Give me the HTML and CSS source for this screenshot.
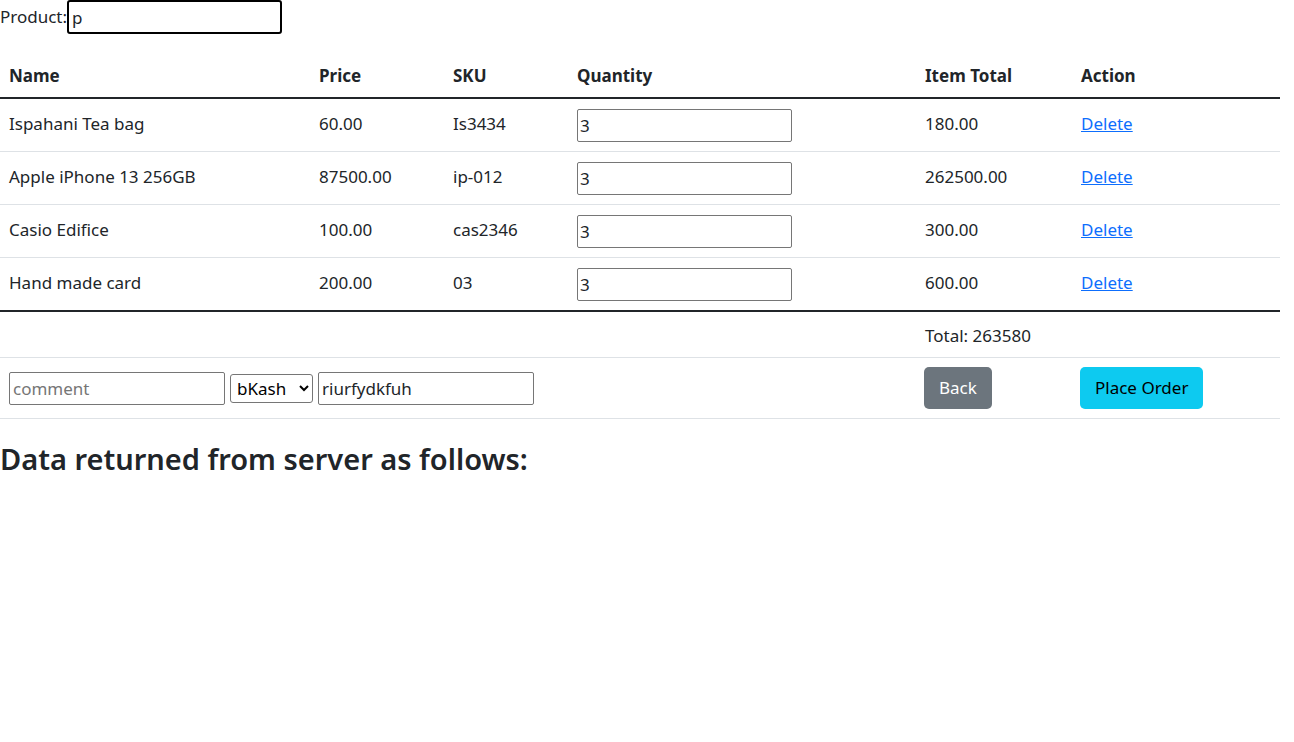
FILE: index.html
```html
<!DOCTYPE html>
<html lang="en">
<head>
<meta charset="utf-8">
<title>Order</title>
<link rel="stylesheet" href="styles.css">
</head>
<body>
<div class="product-row">
  <label class="product-label" for="product">Product:</label>
  <input id="product" class="product-input" type="text" value="p">
</div>

<table class="cart">
  <colgroup>
    <col class="c-name"><col class="c-price"><col class="c-sku"><col class="c-qty"><col class="c-total"><col class="c-action">
  </colgroup>
  <thead>
    <tr><th>Name</th><th>Price</th><th>SKU</th><th>Quantity</th><th>Item Total</th><th>Action</th></tr>
  </thead>
  <tbody>
    <tr><td>Ispahani Tea bag</td><td>60.00</td><td>Is3434</td><td class="qty"><input class="qty-input" type="text" value="3"></td><td>180.00</td><td><a href="#" class="del">Delete</a></td></tr>
    <tr><td>Apple iPhone 13 256GB</td><td>87500.00</td><td>ip-012</td><td class="qty"><input class="qty-input" type="text" value="3"></td><td>262500.00</td><td><a href="#" class="del">Delete</a></td></tr>
    <tr><td>Casio Edifice</td><td>100.00</td><td>cas2346</td><td class="qty"><input class="qty-input" type="text" value="3"></td><td>300.00</td><td><a href="#" class="del">Delete</a></td></tr>
    <tr class="last"><td>Hand made card</td><td>200.00</td><td>03</td><td class="qty"><input class="qty-input" type="text" value="3"></td><td>600.00</td><td><a href="#" class="del">Delete</a></td></tr>
  </tbody>
  <tfoot>
    <tr class="total-row"><td colspan="4"></td><td>Total: 263580</td><td></td></tr>
    <tr class="action-row">
      <td colspan="4">
        <div class="order-fields">
          <input class="field" type="text" placeholder="comment">
          <select class="pay-select"><option>bKash</option><option>Nagad</option></select>
          <input class="field" type="text" value="riurfydkfuh">
        </div>
      </td>
      <td><button class="btn btn-back" type="button">Back</button></td>
      <td><button class="btn btn-place" type="button">Place Order</button></td>
    </tr>
  </tfoot>
</table>

<h2 class="result-title">Data returned from server as follows:</h2>
</body>
</html>
```
FILE: styles.css
```css
* { box-sizing: border-box; }
body {
  margin: 0;
  font-family: "Noto Sans", "Open Sans", sans-serif;
  font-size: 17px;
  line-height: 24px;
  color: #212529;
  background: #fff;
}
input, select, button { font-family: inherit; font-size: 17px; }

.product-row {
  display: flex;
  align-items: center;
  height: 34px;
}
.product-label { line-height: 24px; }
.product-input {
  width: 215px;
  height: 34px;
  border: 2px solid #000;
  border-radius: 3px;
  padding: 0 3px;
  color: #212529;
  outline: none;
}

.cart {
  width: 1280px;
  margin: 23px 0 22px;
  border-collapse: separate;
  border-spacing: 0;
  table-layout: fixed;
}
.c-name { width: 310px; }
.c-price { width: 134px; }
.c-sku { width: 124px; }
.c-qty { width: 348px; }
.c-total { width: 156px; }
.c-action { width: 208px; }

.cart th {
  text-align: left;
  font-weight: 700;
  padding: 7px 8px 9px 9px;
  border-bottom: 2px solid #212529;
}
.cart tbody td {
  vertical-align: top;
  padding: 13px 8px 6px 9px;
  border-bottom: 1px solid #dee2e6;
}
.cart tbody td.qty { padding-top: 8px; padding-bottom: 8px; }
.cart tbody tr.last td { border-bottom: 2px solid #212529; }

.qty-input {
  display: block;
  width: 215px;
  height: 33px;
  margin: 2px 0 1px;
  padding: 1px 2px;
  border: 1px solid #767676;
  border-radius: 2px;
  color: #212529;
}

.del { color: #0d6efd; text-decoration: underline; }

.total-row td {
  padding: 12px 8px 9px 9px;
  border-bottom: 1px solid #dee2e6;
}
.action-row td {
  padding: 9px 8px;
  height: 61px;
  vertical-align: middle;
  border-bottom: 1px solid #dee2e6;
}

.order-fields {
  display: flex;
  align-items: center;
  gap: 5px;
  padding-left: 1px;
}
.field {
  width: 216px;
  height: 33px;
  padding: 1px 3px;
  border: 1px solid #767676;
  border-radius: 2px;
  color: #212529;
}
.field::placeholder { color: #767676; }
.pay-select {
  width: 83px;
  height: 29px;
  padding: 0 2px;
  border: 1px solid #767676;
  border-radius: 3px;
  background: #fff;
  color: #000;
}

.btn {
  display: block;
  height: 42px;
  padding: 0 15px;
  border: none;
  border-radius: 5px;
  line-height: 24px;
  cursor: pointer;
}
.btn-back { background: #6c757d; color: #fff; }
.btn-place { background: #0dcaf0; color: #000; }

.result-title {
  margin: 0;
  font-size: 29px;
  font-weight: 600;
  line-height: 35px;
  color: #212529;
}
```
